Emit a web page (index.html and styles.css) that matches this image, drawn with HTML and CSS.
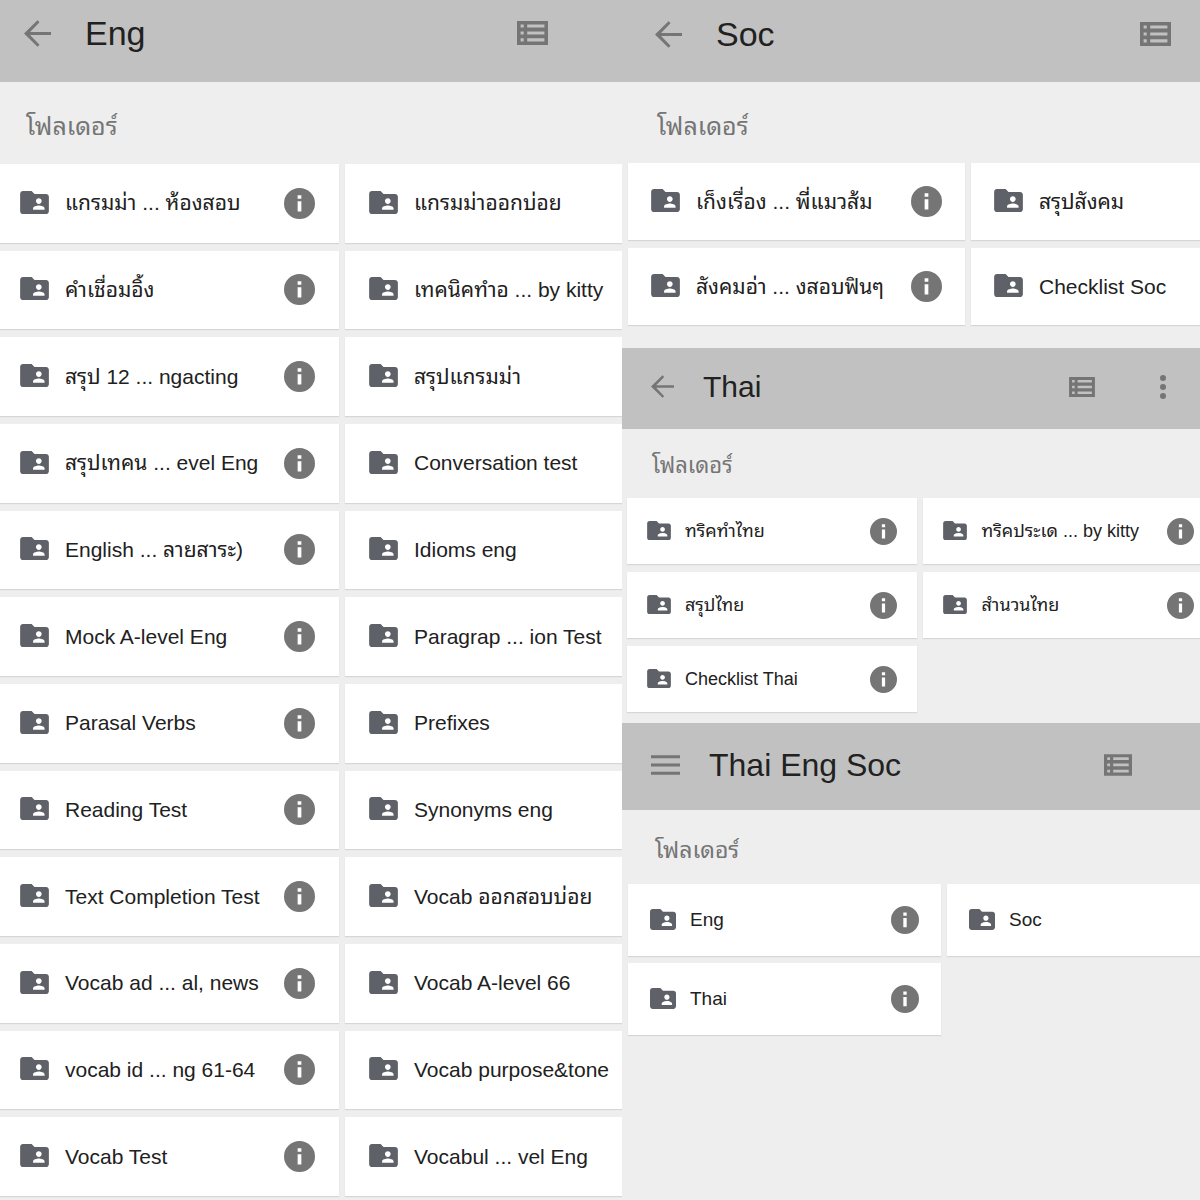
FILE: index.html
```html
<!DOCTYPE html>
<html lang="th">
<head>
<meta charset="utf-8">
<meta name="viewport" content="width=device-width, initial-scale=1">
<title>Thai Eng Soc</title>
<link rel="stylesheet" href="styles.css">
</head>
<body>
<svg class="sprite" aria-hidden="true">
  <symbol id="back" viewBox="4 4 16 16"><path d="M20 11.1H7.6l5.6-5.7L12 4.1 4 12l8 7.900 1.200-1.200-5.600-5.800H20z"/></symbol>
  <symbol id="menu" viewBox="0 0 28 20"><path d="M0 1h28v3H0zM0 9h28v3H0zM0 17h28v3H0z"/></symbol>
  <symbol id="list" viewBox="0 0 31 24"><path fill-rule="evenodd" d="M0 0h31v24H0zM3.600 3.500v3.100h3.100V3.500zM10.200 3.500v3.100h17.200V3.500zM3.600 10.400v3.100h3.100v-3.100zM10.200 10.400v3.100h17.200v-3.100zM3.600 17.300v3.100h3.100v-3.100zM10.200 17.300v3.100h17.200v-3.100z"/></symbol>
  <symbol id="more" viewBox="0 0 6 24"><circle cx="3" cy="3" r="3"/><circle cx="3" cy="12" r="3"/><circle cx="3" cy="21" r="3"/></symbol>
  <symbol id="folder" viewBox="2 4 20 16"><path d="M20 6h-8l-2-2H4c-1.100 0-1.990.9-1.990 2L2 18c0 1.100.9 2 2 2h16c1.100 0 2-.9 2-2V8c0-1.100-.9-2-2-2zm-5 3c1.100 0 2 .9 2 2s-.9 2-2 2-2-.9-2-2 .9-2 2-2zm4 8h-8v-1c0-1.330 2.670-2 4-2s4 .67 4 2v1z"/></symbol>
  <symbol id="info" viewBox="2 2 20 20"><path d="M12 2a10 10 0 1 0 0 20 10 10 0 0 0 0-20zm1.200 15.200h-2.400v-6.700h2.400zm0-8.300h-2.400V6.700h2.400z"/></symbol>
</svg>

<main class="board">
  <section class="panel panel-eng">
    <header class="bar">
      <button class="nav" aria-label="Back"><svg><use href="#back"/></svg></button>
      <h1>Eng</h1>
      <button class="view" aria-label="List view"><svg><use href="#list"/></svg></button>
    </header>
    <h2>โฟลเดอร์</h2>
    <ul class="folders">
      <li><a href="#"><svg><use href="#folder"/></svg>แกรมม่า ... ห้องสอบ</a><button class="info" aria-label="Details"><svg><use href="#info"/></svg></button></li>
      <li><a href="#"><svg><use href="#folder"/></svg>แกรมม่าออกบ่อย</a></li>
      <li><a href="#"><svg><use href="#folder"/></svg>คำเชื่อมอิ้ง</a><button class="info" aria-label="Details"><svg><use href="#info"/></svg></button></li>
      <li><a href="#"><svg><use href="#folder"/></svg>เทคนิคทำอ ... by kitty</a></li>
      <li><a href="#"><svg><use href="#folder"/></svg>สรุป 12 ... ngacting</a><button class="info" aria-label="Details"><svg><use href="#info"/></svg></button></li>
      <li><a href="#"><svg><use href="#folder"/></svg>สรุปแกรมม่า</a></li>
      <li><a href="#"><svg><use href="#folder"/></svg>สรุปเทคน ... evel Eng</a><button class="info" aria-label="Details"><svg><use href="#info"/></svg></button></li>
      <li><a href="#"><svg><use href="#folder"/></svg>Conversation test</a></li>
      <li><a href="#"><svg><use href="#folder"/></svg>English ... ลายสาระ)</a><button class="info" aria-label="Details"><svg><use href="#info"/></svg></button></li>
      <li><a href="#"><svg><use href="#folder"/></svg>Idioms eng</a></li>
      <li><a href="#"><svg><use href="#folder"/></svg>Mock A-level Eng</a><button class="info" aria-label="Details"><svg><use href="#info"/></svg></button></li>
      <li><a href="#"><svg><use href="#folder"/></svg>Paragrap ... ion Test</a></li>
      <li><a href="#"><svg><use href="#folder"/></svg>Parasal Verbs</a><button class="info" aria-label="Details"><svg><use href="#info"/></svg></button></li>
      <li><a href="#"><svg><use href="#folder"/></svg>Prefixes</a></li>
      <li><a href="#"><svg><use href="#folder"/></svg>Reading Test</a><button class="info" aria-label="Details"><svg><use href="#info"/></svg></button></li>
      <li><a href="#"><svg><use href="#folder"/></svg>Synonyms eng</a></li>
      <li><a href="#"><svg><use href="#folder"/></svg>Text Completion Test</a><button class="info" aria-label="Details"><svg><use href="#info"/></svg></button></li>
      <li><a href="#"><svg><use href="#folder"/></svg>Vocab ออกสอบบ่อย</a></li>
      <li><a href="#"><svg><use href="#folder"/></svg>Vocab ad ... al, news</a><button class="info" aria-label="Details"><svg><use href="#info"/></svg></button></li>
      <li><a href="#"><svg><use href="#folder"/></svg>Vocab A-level 66</a></li>
      <li><a href="#"><svg><use href="#folder"/></svg>vocab id ... ng 61-64</a><button class="info" aria-label="Details"><svg><use href="#info"/></svg></button></li>
      <li><a href="#"><svg><use href="#folder"/></svg>Vocab purpose&amp;tone</a></li>
      <li><a href="#"><svg><use href="#folder"/></svg>Vocab Test</a><button class="info" aria-label="Details"><svg><use href="#info"/></svg></button></li>
      <li><a href="#"><svg><use href="#folder"/></svg>Vocabul ... vel Eng</a></li>
    </ul>
  </section>

  <div class="side">
    <section class="panel panel-soc">
      <header class="bar">
        <button class="nav" aria-label="Back"><svg><use href="#back"/></svg></button>
        <h1>Soc</h1>
        <button class="view" aria-label="List view"><svg><use href="#list"/></svg></button>
      </header>
      <h2>โฟลเดอร์</h2>
      <ul class="folders">
        <li><a href="#"><svg><use href="#folder"/></svg>เก็งเรื่อง ... พี่แมวส้ม</a><button class="info" aria-label="Details"><svg><use href="#info"/></svg></button></li>
        <li><a href="#"><svg><use href="#folder"/></svg>สรุปสังคม</a></li>
        <li><a href="#"><svg><use href="#folder"/></svg>สังคมอ่า ... งสอบฟินๆ</a><button class="info" aria-label="Details"><svg><use href="#info"/></svg></button></li>
        <li><a href="#"><svg><use href="#folder"/></svg>Checklist Soc</a></li>
      </ul>
    </section>

    <section class="panel panel-thai">
      <header class="bar">
        <button class="nav" aria-label="Back"><svg><use href="#back"/></svg></button>
        <h1>Thai</h1>
        <button class="view" aria-label="List view"><svg><use href="#list"/></svg></button>
        <button class="more" aria-label="More"><svg><use href="#more"/></svg></button>
      </header>
      <h2>โฟลเดอร์</h2>
      <ul class="folders">
        <li><a href="#"><svg><use href="#folder"/></svg>ทริคทำไทย</a><button class="info" aria-label="Details"><svg><use href="#info"/></svg></button></li>
        <li><a href="#"><svg><use href="#folder"/></svg>ทริคประเด ... by kitty</a><button class="info" aria-label="Details"><svg><use href="#info"/></svg></button></li>
        <li><a href="#"><svg><use href="#folder"/></svg>สรุปไทย</a><button class="info" aria-label="Details"><svg><use href="#info"/></svg></button></li>
        <li><a href="#"><svg><use href="#folder"/></svg>สำนวนไทย</a><button class="info" aria-label="Details"><svg><use href="#info"/></svg></button></li>
        <li><a href="#"><svg><use href="#folder"/></svg>Checklist Thai</a><button class="info" aria-label="Details"><svg><use href="#info"/></svg></button></li>
      </ul>
    </section>

    <section class="panel panel-all">
      <header class="bar">
        <button class="nav" aria-label="Menu"><svg><use href="#menu"/></svg></button>
        <h1>Thai Eng Soc</h1>
        <button class="view" aria-label="List view"><svg><use href="#list"/></svg></button>
      </header>
      <h2>โฟลเดอร์</h2>
      <ul class="folders">
        <li><a href="#"><svg><use href="#folder"/></svg>Eng</a><button class="info" aria-label="Details"><svg><use href="#info"/></svg></button></li>
        <li><a href="#"><svg><use href="#folder"/></svg>Soc</a></li>
        <li><a href="#"><svg><use href="#folder"/></svg>Thai</a><button class="info" aria-label="Details"><svg><use href="#info"/></svg></button></li>
      </ul>
    </section>
  </div>
</main>
</body>
</html>
```
FILE: styles.css
```css
* {
  box-sizing: border-box;
}

body {
  margin: 0;
  background: #eee;
  color: #212121;
  font-family: "Liberation Sans", Arial, "Noto Sans Thai Looped", Loma, Garuda, Waree, Umpush, sans-serif;
}

h1, h2, ul {
  margin: 0;
  padding: 0;
  font-weight: 400;
}

button {
  display: flex;
  padding: 0;
  border: 0;
  background: none;
  color: #757575;
  cursor: pointer;
}

svg {
  display: block;
  flex: none;
  fill: currentColor;
}

.sprite {
  display: none;
}

.board {
  display: grid;
  grid-template-columns: 622fr 578fr;
  min-height: 100vh;
}

.panel {
  display: flex;
  flex-direction: column;
  min-width: 0;
  overflow: hidden;
}

.bar {
  display: flex;
  align-items: center;
  height: var(--bar);
  padding: 0 var(--bar-right) var(--bar-bottom) var(--bar-left);
  background: #c1c1c1;
}

.bar h1 {
  flex: 1;
  padding-left: var(--title-gap);
  font-size: var(--title);
  line-height: 40px;
  white-space: nowrap;
}

.nav svg {
  width: var(--nav);
  height: var(--nav);
}

.view svg {
  width: var(--view);
  height: var(--view-height);
}

.panel h2 {
  display: flex;
  align-items: center;
  height: var(--label-row);
  padding: var(--label-top) 0 0 var(--label-left);
  color: #757575;
  font-size: var(--label);
  line-height: 32px;
}

.folders {
  display: grid;
  grid-template-columns: var(--columns);
  grid-auto-rows: var(--row);
  gap: var(--gap) 6px;
  padding: 0 0 var(--end) 6px;
  list-style: none;
}

.folders li {
  display: flex;
  align-items: center;
  min-width: 0;
  padding: 0 var(--pad);
  background: #fff;
  box-shadow: 0 1px 1px #d6d6d6;
}

.folders li:nth-child(even) {
  padding-right: 6px;
}

.folders a {
  display: flex;
  flex: 1;
  align-items: center;
  gap: 16px;
  color: inherit;
  font-size: var(--text);
  line-height: 32px;
  text-decoration: none;
  white-space: nowrap;
}

.folders a svg {
  width: var(--folder);
  height: var(--folder-height);
  margin-bottom: 2px;
  color: #5f6168;
}

.info svg {
  width: var(--info);
  height: var(--info);
}

.panel-eng,
.panel-soc {
  --bar: 82px;
  --bar-bottom: 14px;
  --title: 34px;
  --title-gap: 34px;
  --nav: 27px;
  --view: 31px;
  --view-height: 24px;
  --label: 25px;
  --label-top: 6px;
  --text: 21px;
  --gap: 8px;
  --pad: 24px;
  --folder: 29px;
  --folder-height: 23px;
  --info: 31px;
}

.panel-eng {
  --bar-bottom: 16px;
  --bar-left: 24px;
  --bar-right: 74px;
  --label-row: 82px;
  --label-left: 26px;
  --columns: 343fr 277fr;
  --row: 1fr;
  --end: 4px;
}

.panel-eng .folders {
  flex: 1;
  margin-left: -4px;
  padding-left: 0;
}

.panel-soc {
  --bar-left: 33px;
  --bar-right: 29px;
  --label-row: 81px;
  --label-left: 35px;
  --columns: 337fr 229fr;
  --row: 77px;
  --end: 23px;
  --pad: 23px;
}

.panel-thai {
  --bar: 81px;
  --bar-bottom: 4px;
  --bar-left: 29px;
  --bar-right: 34px;
  --title: 30px;
  --title-gap: 29px;
  --nav: 23px;
  --view: 26px;
  --view-height: 20px;
  --label-row: 69px;
  --label-top: 4px;
  --label-left: 30px;
  --label: 22px;
  --text: 18px;
  --columns: 291fr 277fr;
  --row: 66px;
  --gap: 8px;
  --end: 11px;
  --pad: 20px;
  --folder: 24px;
  --folder-height: 19px;
  --info: 27px;
}

.panel-thai .folders {
  padding-left: 5px;
}

.panel-thai a {
  gap: 14px;
}

.more {
  margin-left: 65px;
}

.more svg {
  width: 6px;
  height: 24px;
}

.panel-all {
  --bar: 87px;
  --bar-bottom: 4px;
  --bar-left: 29px;
  --bar-right: 68px;
  --title: 32px;
  --title-gap: 29px;
  --nav: 29px;
  --view: 28px;
  --view-height: 22px;
  --label-row: 74px;
  --label-top: 6px;
  --label-left: 33px;
  --label: 23px;
  --text: 19px;
  --columns: 313fr 253fr;
  --row: 72px;
  --gap: 7px;
  --end: 10px;
  --pad: 22px;
  --folder: 26px;
  --folder-height: 21px;
  --info: 28px;
}

.panel-all a {
  gap: 14px;
}
```
